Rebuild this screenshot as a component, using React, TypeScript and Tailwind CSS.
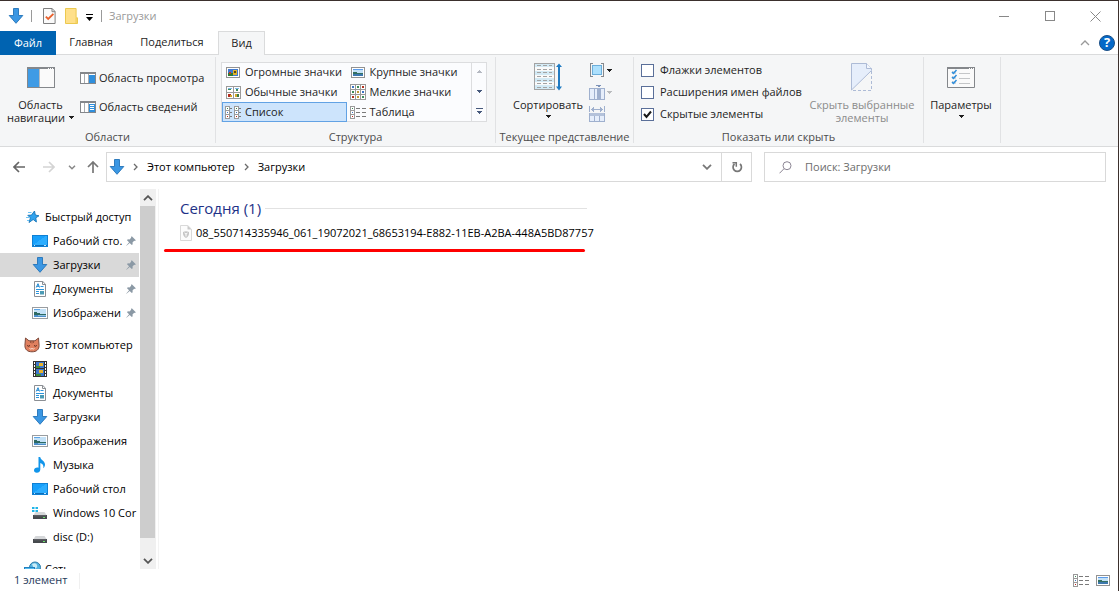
import React, { useState } from "react";

interface IconProps {
  className?: string;
}

const DownArrowIcon = ({ className = "" }: IconProps) => (
  <svg width="16" height="16" viewBox="0 0 16 16" className={`shrink-0 ${className}`}>
    <path d="M5.500.5h5v7h4.300L8 15.300 1.200 7.500h4.300z" fill="#3b97e3" stroke="#2273b8" strokeWidth=".9" />
  </svg>
);

const DocCheckIcon = () => (
  <svg width="13" height="16" viewBox="0 0 13 16" className="shrink-0">
    <path d="M.5.5h8.600l3 3v12H.5z" fill="#fafafa" stroke="#7f7f7f" />
    <path d="M9 .5v3.200h3" fill="none" stroke="#7f7f7f" />
    <path d="M2.800 8.600 5.200 11 10.400 5.800" fill="none" stroke="#e8602c" strokeWidth="1.800" />
  </svg>
);

const FolderIcon = () => (
  <svg width="13" height="16" viewBox="0 0 13 16" className="shrink-0">
    <path d="M.5.5h10.600v9.300h1.400v5.700H.5z" fill="#ffe08a" stroke="#ecc94f" />
    <path d="M11.100 10v5" stroke="#ecc94f" />
  </svg>
);

const Caret = ({ className = "" }: IconProps) => (
  <svg width="5" height="3" viewBox="0 0 5 3" shapeRendering="crispEdges" className={`inline-block shrink-0 ${className}`}>
    <path d="M0 0h5v1H4v1H3v1H2V2H1V1H0z" fill="currentColor" />
  </svg>
);

const StarIcon = () => (
  <svg width="16" height="16" viewBox="0 0 16 16" className="shrink-0">
    <path d="M10.500 2l.8 4 3.700.8-3.200 2 .6 4.200L9.200 10.500 5 13.500l1.400-4.600-2.600-2.600 3.700-.2z" fill="#31a3ee" stroke="#1675b8" strokeWidth=".9" />
    <path d="M4 3.500h3.500M2 8.500h3M3 11.500h2" stroke="#6cc3f5" />
  </svg>
);

const DesktopIcon = () => (
  <svg width="16" height="16" viewBox="0 0 16 16" className="shrink-0" shapeRendering="crispEdges">
    <path d="M0 2h16v12H0z" fill="#0f80d4" />
    <path d="M1 3h14v9H1z" fill="#18a0fb" />
    <path d="M1 12 14 3h1v9z" fill="#2cadff" />
    <path d="M1 12h14v1H1z" fill="#0b6fbb" />
    <path d="M2 12h1v1H2zM12 12h2v1h-2z" fill="#bfe4ff" />
  </svg>
);

const DocumentIcon = () => (
  <svg width="16" height="16" viewBox="0 0 16 16" className="shrink-0">
    <path d="M2.500.5h8.300l2.700 2.700v12.300h-11z" fill="#fff" stroke="#8b8f94" />
    <path d="M10.500.5v3h3" fill="none" stroke="#8b8f94" />
    <path d="M4.200 6.500 6 2.700l1.500 3.800M5 5.300h2" fill="none" stroke="#1b86d1" />
    <path d="M8.500 5.500h3M4 8.500h8M4 10.500h3M4 12.500h3" stroke="#2b94dc" />
    <path d="M8 10h4v3.500H8z" fill="#4b9bb5" />
  </svg>
);

const PictureIcon = () => (
  <svg width="16" height="12" viewBox="0 0 16 12" className="shrink-0" shapeRendering="crispEdges">
    <path d="M.5.5h15v11H.5z" fill="#fff" stroke="#999da1" />
    <path d="M2 2h12v8H2z" fill="#c3e1f7" />
    <path d="M2 2h6v1H2z" fill="#5ba4e6" />
    <path d="M2 5h3v1h3v1h6v1H2z" fill="#2e6a62" />
    <path d="M2 8h12v2H2z" fill="#4c8ecb" />
    <path d="M6 8h8v1H6z" fill="#8fc0dd" />
  </svg>
);

const SmallPictureIcon = () => (
  <svg width="14" height="11" viewBox="0 0 14 11" className="shrink-0" shapeRendering="crispEdges">
    <path d="M.5.5h13v10H.5z" fill="#fff" stroke="#929292" />
    <path d="M2 2h10v7H2z" fill="#c3e1f7" />
    <path d="M2 2h10v1H2z" fill="#5b9bea" />
    <path d="M2 5h4v1h6v1H2z" fill="#357060" />
    <path d="M2 7h10v2H2z" fill="#3d78ad" />
  </svg>
);

const BigPictureIcon = () => (
  <svg width="14" height="11" viewBox="0 0 14 11" className="shrink-0" shapeRendering="crispEdges">
    <path d="M.5.5h13v10H.5z" fill="#fff" stroke="#929292" />
    <path d="M2 2h10v7H2z" fill="#3f79d0" />
    <path d="M2 6h5v3H2z" fill="#2d7a34" />
    <path d="M3 5h2v2H3z" fill="#c23b22" />
    <path d="M7 3h4v5H7z" fill="#e0b32c" />
    <path d="M8 4h2v2H8z" fill="#5b4510" />
  </svg>
);

const TileGridIcon = () => (
  <svg width="15" height="13" viewBox="0 0 15 13" className="shrink-0" shapeRendering="crispEdges">
    <path d="M.5.5h14v12H.5zM7.500.5v12M.5 6.500h14" fill="#fff" stroke="#9a9a9a" />
    <path d="M2 2h4v1H2zM9 2h4v1H9z" fill="#7db6e8" />
    <path d="M2 3h3v1H2zM10 3h2v2h-2z" fill="#3c8a5b" />
    <path d="M2 8h3v3H2z" fill="#b32b1e" />
    <path d="M4 9h2v2H4zM9 8h2v3H9z" fill="#d3a72c" />
    <path d="M11 8h2v3h-2z" fill="#3a7a45" />
  </svg>
);

const SmallGridIcon = () => (
  <svg width="16" height="16" viewBox="0 0 16 16" className="shrink-0" shapeRendering="crispEdges">
    <path d="M.5.5h15v15H.5zM5.500.5v15M10.500.5v15M.5 5.500h15M.5 10.500h15" fill="#fff" stroke="#9a9a9a" />
    <path d="M2 2h2v2H2zM12 7h2v2h-2z" fill="#3c74c4" />
    <path d="M7 2h2v2H7zM2 7h2v2H2zM12 12h2v2h-2z" fill="#3d8b57" />
    <path d="M12 2h2v2h-2zM2 12h2v2H2z" fill="#b3301f" />
    <path d="M7 7h2v2H7zM7 12h2v2H7z" fill="#c09a35" />
  </svg>
);

const ListIcon = () => (
  <svg width="16" height="13" viewBox="0 0 16 13" className="shrink-0" shapeRendering="crispEdges">
    <path d="M.5.5h4v12h-4zM9.500.5h4v12h-4z" fill="#fff" stroke="#9a9a9a" />
    <path d="M1 4.500h3M1 8.500h3M10 4.500h3M10 8.500h3" stroke="#9a9a9a" />
    <path d="M5 2.500h2M5 6.500h2M5 10.500h2M14 2.500h2M14 6.500h2M14 10.500h2" stroke="#7a7a7a" />
    <path d="M2 2h1v1H2zM11 2h1v1h-1z" fill="#3d8b57" />
    <path d="M2 6h1v1H2zM11 6h1v1h-1z" fill="#3c74c4" />
    <path d="M2 10h1v1H2zM11 10h1v1h-1z" fill="#c0271c" />
  </svg>
);

const DetailsIcon = () => (
  <svg width="16" height="13" viewBox="0 0 16 13" className="shrink-0" shapeRendering="crispEdges">
    <path d="M.5.5h4v12h-4zM.5 4.500h4M.5 8.500h4" fill="#fff" stroke="#9a9a9a" />
    <path d="M6 2.500h4M12 2.500h4M6 6.500h4M12 6.500h4M6 10.500h4M12 10.500h4" stroke="#7a7a7a" />
    <path d="M2 2h1v1H2z" fill="#3d8b57" />
    <path d="M2 6h1v1H2z" fill="#3c74c4" />
    <path d="M2 10h1v1H2z" fill="#c0271c" />
  </svg>
);

const CatIcon = () => (
  <svg width="16" height="16" viewBox="0 0 16 16" className="shrink-0">
    <path d="M1.500 1 5 3.800h6L14.500 1l.6 7.500c0 4-2.600 6.300-7.100 6.300S.9 12.500.9 8.500z" fill="#e0805f" stroke="#7d4a3c" />
    <path d="M6.500 4v2M8 4v2.500M9.500 4v2" stroke="#8d4c38" strokeWidth=".8" />
    <path d="M3.200 8.500q1.300 1.500 2.800 0M10 8.500q1.500 1.500 2.800 0" fill="none" stroke="#54281e" />
    <path d="M5.500 11.500q1.300 1.200 2.500 0 1.200 1.200 2.500 0" fill="none" stroke="#fbe3d8" />
  </svg>
);

const VideoIcon = () => (
  <svg width="14" height="16" viewBox="0 0 14 16" className="ml-px shrink-0" shapeRendering="crispEdges">
    <path d="M0 0h14v16H0z" fill="#333" />
    <path d="M3 1h8v6H3z" fill="#3c78cf" />
    <path d="M3 8h8v7H3z" fill="#3c78cf" />
    <path d="M6 2h4v3H6zM6 9h4v3H6z" fill="#e9b32b" />
    <path d="M3 5h4v2H3zM3 13h5v2H3z" fill="#3f8d3e" />
    <path d="M1.500 1v14M12.500 1v14" stroke="#fff" strokeDasharray="2 1" />
  </svg>
);

const MusicIcon = () => (
  <svg width="16" height="16" viewBox="0 0 16 16" className="shrink-0">
    <path d="M6.500 0h1.700c.3 3 4.800 3.900 4.800 7.500 0 1.500-.6 2.700-1.700 3.700.6-3-.7-4.500-3-5.200v6.500c0 2-1.600 3.300-3.500 3.300S2 14.800 2 13.300s1.500-2.700 3.300-2.700c.5 0 .8.100 1.200.2z" fill="#1195ea" />
  </svg>
);

const DriveIcon = ({ windows }: { windows?: boolean }) => (
  <svg width="16" height="16" viewBox="0 0 16 16" className="shrink-0">
    <path d="M3.500 7h9l2 3h-13z" fill="#d5d7d9" />
    <path d="M1 10h14v4H1z" fill="#46494d" />
    <path d="M2 10.800h12" stroke="#787b80" strokeWidth=".6" />
    <path d="M11 12h2v1h-2z" fill="#6be36b" />
    {windows && <path d="M0 2h2.500v2H0zM3.500 2H6v2H3.500zM0 5h2.500v2H0zM3.500 5H6v2H3.500z" fill="#20b5e8" />}
  </svg>
);

const NetworkIcon = () => (
  <svg width="18" height="16" viewBox="0 0 18 16" className="shrink-0">
    <circle cx="11" cy="6.500" r="5.500" fill="#56b3df" stroke="#2d7ca9" />
    <path d="M8 3q4-2 5 1t-3 4" fill="#c9ebf7" />
    <path d="M0 6h11v8H0z" fill="#2180c0" />
    <path d="M1 7h9v5H1z" fill="#53bcf0" />
  </svg>
);

const PinIcon = () => (
  <svg width="10" height="10" viewBox="0 0 10 10" className="shrink-0">
    <path d="M5.800.2 9.800 4.200 9 5l-.8-.2L6.500 6.500l.2 1.700-.9.8L3.700 6.900.5 9.700l-.2-.2L3.100 6.300 1 4.200l.8-.9 1.700.2L5.200 1.800 5 1z" fill="#8b99a5" />
  </svg>
);

const NavPaneIcon = () => (
  <svg width="28" height="21" viewBox="0 0 28 21" shapeRendering="crispEdges">
    <path d="M.5.5h27v20H.5z" fill="#fafafa" stroke="#84878b" />
    <path d="M0 0h28v2H0z" fill="#84878b" />
    <path d="M21 1h1v1h-1zM23 1h1v1h-1zM25 1h1v1h-1z" fill="#fff" />
    <path d="M1 2h11v18H1z" fill="#3f9be5" />
    <path d="M12.500 2v18" stroke="#b8bbbf" />
  </svg>
);

const PaneIcon = ({ details }: { details?: boolean }) => (
  <svg width="16" height="12" viewBox="0 0 16 12" shapeRendering="crispEdges" className="shrink-0">
    <path d="M.5.5h15v11H.5z" fill="#fff" stroke="#84878b" />
    <path d="M0 0h16v2H0z" fill="#84878b" />
    <path d="M4.500 2v9" stroke="#a9acb0" />
    <path d="M9 3h6v8H9z" fill="#2f8fdd" />
    {details && <path d="M10 4.500h4M10 6.500h4M10 8.500h4" stroke="#fff" />}
    <path d="M8.500 2v9" stroke="#a9acb0" />
  </svg>
);

const SortIcon = () => (
  <svg width="28" height="28" viewBox="0 0 28 28">
    <g shapeRendering="crispEdges">
      <path d="M.5.5h20v26H.5z" fill="#fafafa" stroke="#a3a3a3" />
      <path d="M1 1h19v3H1zM1 8h19v4H1zM1 15h19v4H1zM1 22h19v4H1z" fill="#d3eaf5" />
      <path
        d="M3 2.500h15M3 6.500h15M3 9.500h15M3 13.500h15M3 17.500h15M3 20.500h15M3 24.500h15"
        stroke="#a3a3a3"
        strokeDasharray="4 2"
      />
    </g>
    <path d="M25 2v23" stroke="#1f7ac2" strokeWidth="2" />
    <path d="M22 4 25 .5 28 4zM22 23.500 25 27.500 28 23.500z" fill="#1f7ac2" />
  </svg>
);

const GroupByIcon = () => (
  <svg width="14" height="14" viewBox="0 0 14 14" shapeRendering="crispEdges" className="shrink-0">
    <path d="M3 .5H.5v13H3M11 .5h2.500v13H11" fill="none" stroke="#85888c" />
    <path d="M2.500 2.500h9v9h-9z" fill="#ace0fd" stroke="#6caeda" />
  </svg>
);

const AddColumnsIcon = () => (
  <svg width="16" height="15" viewBox="0 0 16 15" shapeRendering="crispEdges" className="shrink-0">
    <path d="M.5 3.500h15v11H.5zM5.500 3.500v11" fill="#e6eefb" stroke="#9fb0ce" />
    <path d="M8 3h4v12H8z" fill="#9fb0ce" />
    <path d="M7 0h5v1h-1v1H9V1H7z" fill="#7d92b8" />
  </svg>
);

const FitColumnsIcon = () => (
  <svg width="16" height="16" viewBox="0 0 16 16" shapeRendering="crispEdges" className="shrink-0">
    <path d="M.5 0v6M15.500 0v6M2 3.500h12" stroke="#9fb0ce" />
    <path d="M2 3h1V2h1V1h1v5H4V5H3V4H2zM14 3h-1V2h-1V1h-1v5h1V5h1V4h1z" fill="#9fb0ce" />
    <path d="M.5 7.500h15v8H.5zM5.500 10v5M10.500 10v5" fill="#e6eefb" stroke="#9fb0ce" />
    <path d="M1 7h14v3H1z" fill="#b4c2da" />
  </svg>
);

const HideIcon = () => (
  <svg width="22" height="28" viewBox="0 0 22 28">
    <path d="M.5 27V.5h15l5 5v2z" fill="#e6eefb" stroke="#adbbd6" />
    <path d="M15.500.5v5h5" fill="#f4f7fd" stroke="#adbbd6" />
    <path d="M20.500 8v19.500H1" fill="none" stroke="#adbbd6" strokeDasharray="3 2" />
  </svg>
);

const OptionsIcon = () => (
  <svg width="28" height="21" viewBox="0 0 28 21">
    <path d="M.5.5h27v20H.5z" fill="#fafafa" stroke="#84878b" />
    <path d="M0 0h28v2H0z" fill="#84878b" />
    <path d="M22 1h1v1h-1zM24 1h1v1h-1zM26 1h1v1h-1z" fill="#fff" />
    <path d="M5 4h4v3H5zM5 9h4v3H5zM5 14h4v3H5z" fill="#d8dadc" />
    <path d="m5 5 1.500 1.500L9.500 3M5 10l1.500 1.500L9.500 8M5 15l1.500 1.500 3-3.500" fill="none" stroke="#2f8fdd" strokeWidth="1.500" />
    <path d="M12 6.500h11M12 11.500h11M12 16.500h11" stroke="#c4c6c8" />
  </svg>
);

const FileIcon = () => (
  <svg width="12" height="16" viewBox="0 0 12 16" className="shrink-0">
    <path d="M.5.5h7.300l3.700 3.700v11.300H.5z" fill="#fcfcfc" stroke="#d9d9d9" />
    <path d="M7.500.5v4h4z" fill="#c9c9c9" />
    <path d="M3 7q3-1.500 6 0 .5 4-3 6-3.500-2-3-6z" fill="#c6c6c6" />
    <path d="m4.500 8 1.500 1 1.500-1M6 9v2.500" fill="none" stroke="#fff" />
  </svg>
);

const Chevron = ({ className = "" }: IconProps) => (
  <svg width="10" height="6" viewBox="0 0 10 6" className={`shrink-0 ${className}`}>
    <path d="m1 .8 4 4 4-4" fill="none" stroke="currentColor" strokeWidth="1.800" />
  </svg>
);

const CrumbChevron = () => (
  <svg width="5" height="8" viewBox="0 0 5 8" className="shrink-0">
    <path d="m1 1 3 3-3 3" fill="none" stroke="#6b6b6b" strokeWidth="1.300" />
  </svg>
);

const NavArrow = ({ className = "" }: IconProps) => (
  <svg width="12" height="12" viewBox="0 0 12 12" className={`shrink-0 ${className}`}>
    <path d="M12 6H1M6 1 1 6l5 5" fill="none" stroke="currentColor" strokeWidth="1.700" />
  </svg>
);

interface GroupProps {
  label?: string;
  width: string;
  children: React.ReactNode;
}

const Group = ({ label, width, children }: GroupProps) => (
  <section className={`${width} my-0.5 flex h-[86px] shrink-0 flex-col border-r border-[#e1e2e4]`}>
    <div className="flex h-[72px] shrink-0">{children}</div>
    <h2 className="text-center leading-4 whitespace-nowrap text-[#4c4c4c]">{label}</h2>
  </section>
);

const layouts = [
  { name: "Огромные значки", icon: <BigPictureIcon /> },
  { name: "Крупные значки", icon: <SmallPictureIcon /> },
  { name: "Обычные значки", icon: <TileGridIcon /> },
  { name: "Мелкие значки", icon: <SmallGridIcon /> },
  { name: "Список", icon: <ListIcon /> },
  { name: "Таблица", icon: <DetailsIcon /> },
];

const toggles = [
  { label: "Флажки элементов", checked: false },
  { label: "Расширения имен файлов", checked: false },
  { label: "Скрытые элементы", checked: true },
];

const Ribbon = () => {
  const [layout, setLayout] = useState("Список");

  return (
    <div className="flex h-[92px] shrink-0 overflow-hidden border-b border-[#dadbdc] bg-[#f5f6f7]">
      <Group label="Области" width="w-[216px]">
        <button className="flex w-20 shrink-0 flex-col items-center pt-[10px] pl-px leading-[13px]">
          <NavPaneIcon />
          <span className="mt-[10px]">Область</span>
          <span className="flex items-center gap-1 whitespace-nowrap">
            навигации
            <Caret />
          </span>
        </button>
        <div className="flex flex-col gap-[13px] pt-[13px]">
          <button className="flex h-4 items-center gap-[3px] whitespace-nowrap">
            <PaneIcon />
            Область просмотра
          </button>
          <button className="flex h-4 items-center gap-[3px] whitespace-nowrap">
            <PaneIcon details />
            Область сведений
          </button>
        </div>
      </Group>

      <Group label="Структура" width="w-[280px]">
        <div className="mt-[5px] ml-[5px] flex h-[60px] w-[266px] border border-[#dcdddf] bg-[#fbfcfe]">
          <div className="-mt-px grid flex-1 grid-cols-2 content-start">
            {layouts.map((item) => (
              <button
                key={item.name}
                onClick={() => setLayout(item.name)}
                className={`flex h-5 items-center gap-[3px] border pl-px whitespace-nowrap ${
                  layout === item.name ? "border-[#62a2e4] bg-[#cde4fc]" : "border-transparent"
                }`}
              >
                <span className="flex w-[18px] shrink-0 justify-center">{item.icon}</span>
                {item.name}
              </button>
            ))}
          </div>
          <div className="-mt-px flex w-[15px] flex-col border-l border-[#dcdddf] text-[#46597c]">
            <button aria-label="Вверх" className="flex h-5 items-center justify-center text-[#b5b9c2]">
              <Caret className="rotate-180" />
            </button>
            <button aria-label="Вниз" className="flex h-5 items-center justify-center">
              <Caret />
            </button>
            <button aria-label="Все варианты" className="flex h-5 flex-col items-center justify-center gap-0.5">
              <span className="h-px w-[7px] bg-[#46597c]" />
              <Caret />
            </button>
          </div>
        </div>
      </Group>

      <Group label="Текущее представление" width="w-[138px]">
        <button className="ml-4 flex w-[72px] shrink-0 flex-col items-center pt-[6px] leading-[13px]">
          <SortIcon />
          <span className="mt-[7px]">Сортировать</span>
          <Caret className="mt-1" />
        </button>
        <div className="ml-[5px] flex flex-col gap-[6px] pt-[5px]">
          <button aria-label="Группировать" className="flex h-4 items-center gap-[3px] pl-px">
            <GroupByIcon />
            <Caret />
          </button>
          <button aria-label="Добавить столбцы" className="flex h-4 items-center gap-0.5 text-[#b9bbbe]">
            <AddColumnsIcon />
            <Caret />
          </button>
          <button aria-label="Размер всех столбцов" className="flex h-4 items-center">
            <FitColumnsIcon />
          </button>
        </div>
      </Group>

      <Group label="Показать или скрыть" width="w-[290px]">
        <div className="flex w-[169px] shrink-0 flex-col gap-[6px] pt-[5px] pl-[7px]">
          {toggles.map((t) => (
            <label key={t.label} className="flex h-4 items-center gap-[6px] whitespace-nowrap">
              <span className="relative flex">
                <input
                  type="checkbox"
                  defaultChecked={t.checked}
                  className="peer size-[13px] appearance-none border border-[#5a6f99] bg-white"
                />
                <svg viewBox="0 0 13 13" className="pointer-events-none absolute inset-0 hidden size-[13px] peer-checked:block">
                  <path d="m3 6 2.500 3L10 3.500" fill="none" stroke="#1a1a1a" strokeWidth="2" />
                </svg>
              </span>
              {t.label}
            </label>
          ))}
        </div>
        <button disabled className="flex w-[118px] shrink-0 flex-col items-center pt-[6px] leading-[13px] text-[#8b8b8b]">
          <HideIcon />
          <span className="mt-[7px] whitespace-nowrap">Скрыть выбранные</span>
          <span>элементы</span>
        </button>
      </Group>

      <Group width="w-[77px]">
        <button className="flex w-[74px] flex-col items-center pt-[10px] leading-[13px]">
          <OptionsIcon />
          <span className="mt-[10px]">Параметры</span>
          <Caret className="mt-1" />
        </button>
      </Group>
    </div>
  );
};

const quickAccess = [
  { name: "Рабочий сто.", icon: <DesktopIcon /> },
  { name: "Загрузки", icon: <DownArrowIcon />, active: true },
  { name: "Документы", icon: <DocumentIcon /> },
  { name: "Изображени", icon: <PictureIcon /> },
];

const computer = [
  { name: "Видео", icon: <VideoIcon /> },
  { name: "Документы", icon: <DocumentIcon /> },
  { name: "Загрузки", icon: <DownArrowIcon /> },
  { name: "Изображения", icon: <PictureIcon /> },
  { name: "Музыка", icon: <MusicIcon /> },
  { name: "Рабочий стол", icon: <DesktopIcon /> },
  { name: "Windows 10 Cor", icon: <DriveIcon windows /> },
  { name: "disc (D:)", icon: <DriveIcon /> },
];

interface TreeRowProps {
  name: string;
  icon: React.ReactNode;
  root?: boolean;
  active?: boolean;
  pinned?: boolean;
}

const TreeRow = ({ name, icon, root, active, pinned }: TreeRowProps) => (
  <li>
    <a
      href="#"
      className={`flex h-6 w-full items-center whitespace-nowrap ${root ? "pl-6" : "pl-8"} ${
        active ? "bg-[#d9d9d9]" : ""
      }`}
    >
      <span className="flex w-[21px] shrink-0 items-center">{icon}</span>
      <span className="flex-1">{name}</span>
      {pinned && (
        <span className="mr-[3px] shrink-0">
          <PinIcon />
        </span>
      )}
    </a>
  </li>
);

const Sidebar = () => (
  <div className="flex w-[159px] shrink-0 border-r border-[#f3f3f3]">
    <nav className="w-[139px] overflow-hidden pt-4 text-black">
      <ul>
        <TreeRow root name="Быстрый доступ" icon={<StarIcon />} />
        {quickAccess.map((item) => (
          <TreeRow key={item.name} pinned {...item} />
        ))}
      </ul>
      <ul className="mt-2">
        <TreeRow root name="Этот компьютер" icon={<CatIcon />} />
        {computer.map((item) => (
          <TreeRow key={item.name} {...item} />
        ))}
      </ul>
      <ul className="mt-2">
        <TreeRow root name="Сеть" icon={<NetworkIcon />} />
      </ul>
    </nav>
    <div className="ml-px flex w-4 flex-col bg-[#f0f0f0] text-[#555]">
      <button aria-label="Прокрутить вверх" className="flex h-[17px] items-center justify-center">
        <Chevron className="rotate-180" />
      </button>
      <div className="mr-px flex-1 bg-[#cdcdcd]" />
      <div className="h-3.5" />
      <button aria-label="Прокрутить вниз" className="flex h-[17px] items-center justify-center">
        <Chevron />
      </button>
    </div>
  </div>
);

const App = () => {
  return (
    <div className="flex h-screen flex-col overflow-hidden border-t border-r border-[#3b302d] bg-white font-['Open_Sans','Noto_Sans',sans-serif] text-[11px] text-[#1e1e1e]">
      <header className="flex h-[30px] shrink-0 items-center">
        <DownArrowIcon className="ml-2" />
        <span className="ml-[7px] h-3 w-px bg-[#9a9a9a]" />
        <button aria-label="Свойства" className="ml-[11px]">
          <DocCheckIcon />
        </button>
        <button aria-label="Новая папка" className="ml-[9px]">
          <FolderIcon />
        </button>
        <button aria-label="Настройка панели" className="ml-2 flex flex-col items-center gap-0.5 pt-0.5 text-black">
          <span className="h-px w-[7px] bg-black" />
          <svg width="7" height="4" viewBox="0 0 7 4">
            <path d="M0 0h7L3.500 4z" fill="#000" />
          </svg>
        </button>
        <span className="ml-2 h-3 w-px bg-[#9a9a9a]" />
        <h1 className="ml-[7px] text-[#999]">Загрузки</h1>
        <div className="ml-auto flex h-full text-[#888]">
          <button aria-label="Свернуть" className="flex w-[46px] items-center justify-center">
            <span className="h-px w-[10px] bg-[#888]" />
          </button>
          <button aria-label="Развернуть" className="flex w-[45px] items-center justify-center">
            <span className="size-[10px] border border-[#888]" />
          </button>
          <button aria-label="Закрыть" className="flex w-[46px] items-center justify-center">
            <svg width="11" height="11" viewBox="0 0 11 11">
              <path d="m.5.5 10 10m0-10-10 10" stroke="currentColor" />
            </svg>
          </button>
        </div>
      </header>

      <div className="flex h-6 shrink-0 items-stretch">
        <button className="w-14 bg-[#0063b1] text-white">Файл</button>
        <button className="w-[70px] border-b border-[#dadbdc]">Главная</button>
        <button className="w-[92px] border-b border-[#dadbdc]">Поделиться</button>
        <button className="w-[47px] border border-b-0 border-[#dadbdc] bg-[#f5f6f7]">Вид</button>
        <div className="flex flex-1 items-center justify-end gap-[9px] border-b border-[#dadbdc] pr-[3px]">
          <button aria-label="Свернуть ленту" className="text-[#999]">
            <svg width="10" height="6" viewBox="0 0 10 6">
              <path d="m1 5 4-4 4 4" fill="none" stroke="currentColor" strokeWidth="1.300" />
            </svg>
          </button>
          <button
            aria-label="Справка"
            className="flex size-4 items-center justify-center rounded-full border border-[#1b4f86] bg-[#0569c8] text-[13px] font-bold text-white"
          >
            ?
          </button>
        </div>
      </div>

      <Ribbon />

      <div className="flex h-[42px] shrink-0 items-start pt-[5px] pr-3">
        <div className="flex h-[30px] w-[106px] shrink-0 items-center pl-[13px]">
          <button aria-label="Назад" className="text-[#666]">
            <NavArrow />
          </button>
          <button aria-label="Вперед" className="ml-[18px] text-[#d4d4d4]">
            <NavArrow className="rotate-180" />
          </button>
          <button aria-label="Последние расположения" className="ml-[13px] text-[#888]">
            <svg width="8" height="5" viewBox="0 0 8 5">
              <path d="m1 .8 3 3 3-3" fill="none" stroke="currentColor" strokeWidth="1.500" />
            </svg>
          </button>
          <button aria-label="Вверх на уровень" className="ml-[11px] text-[#777]">
            <NavArrow className="rotate-90" />
          </button>
        </div>
        <div className="flex h-[30px] min-w-0 flex-1 items-center border border-[#d9d9d9] pl-[2px]">
          <DownArrowIcon />
          <nav className="flex flex-1 items-center gap-[9px] pl-2 text-black">
            <CrumbChevron />
            <a href="#">Этот компьютер</a>
            <CrumbChevron />
            <a href="#">Загрузки</a>
          </nav>
          <button aria-label="Предыдущие расположения" className="mr-[9px] text-[#777]">
            <Chevron />
          </button>
        </div>
        <button
          aria-label="Обновить"
          className="flex h-[30px] w-[30px] shrink-0 items-center justify-center border border-l-0 border-[#d9d9d9] text-[#777]"
        >
          <svg width="12" height="12" viewBox="0 0 12 12">
            <path d="M9 3a4.200 4.200 0 1 1-5.500 0" fill="none" stroke="currentColor" strokeWidth="1.700" />
            <path d="M1.500 1.700h3.800v4" fill="none" stroke="currentColor" strokeWidth="1.500" />
          </svg>
        </button>
        <div className="ml-3 flex h-[30px] w-[342px] shrink-0 items-center border border-[#d9d9d9] pl-[14px]">
          <svg width="13" height="13" viewBox="0 0 13 13" className="shrink-0">
            <circle cx="8" cy="4.700" r="4" fill="none" stroke="#8c8694" />
            <path d="M5 7.700.5 12.300" stroke="#8c8694" />
          </svg>
          <input
            type="text"
            aria-label="Поиск"
            placeholder="Поиск: Загрузки"
            className="ml-[13px] min-w-0 flex-1 outline-none placeholder:text-[#6d6d6d]"
          />
        </div>
      </div>

      <div className="flex min-h-0 flex-1">
        <Sidebar />
        <main className="min-w-0 flex-1">
          <div className="mt-[9px] ml-[21px] flex w-[407px] items-center gap-1">
            <h2 className="text-[15px] leading-5 whitespace-nowrap text-[#1e3287]">Сегодня (1)</h2>
            <span className="h-px flex-1 bg-[#e2e2e2]" />
          </div>
          <a href="#" className="mt-[6px] ml-[21px] flex h-[18px] items-center gap-1 whitespace-nowrap text-black">
            <FileIcon />
            08_550714335946_061_19072021_68653194-E882-11EB-A2BA-448A5BD87757
          </a>
          <div className="mt-[7px] ml-[5px] h-[3px] w-[421px] rounded-full bg-[#f00]" />
        </main>
      </div>

      <footer className="flex h-[22px] shrink-0 items-center pt-px pr-2 pl-[14px] text-[#1e395b]">
        <span>1 элемент</span>
        <span className="ml-3 h-4 w-px bg-[#f0f0f0]" />
        <div className="ml-auto flex gap-[7px]">
          <button aria-label="Таблица">
            <DetailsIcon />
          </button>
          <button aria-label="Крупные значки">
            <SmallPictureIcon />
          </button>
        </div>
      </footer>
    </div>
  );
};

export default App;
